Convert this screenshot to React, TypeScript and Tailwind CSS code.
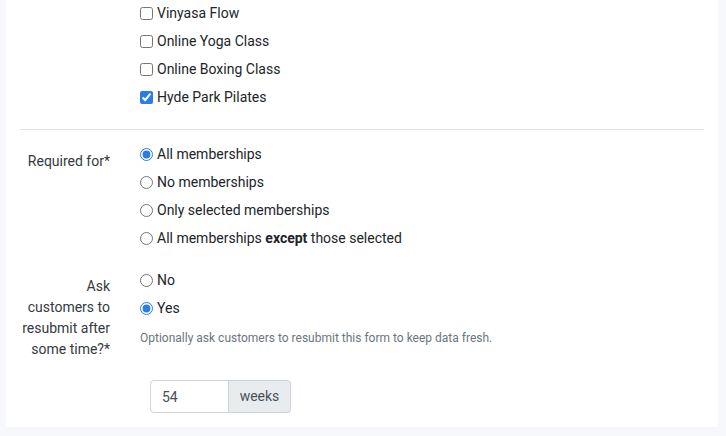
import React from "react";

const font = { fontFamily: "Roboto, 'Liberation Sans', sans-serif" };

function Check({ label, checked }: { label: string; checked?: boolean }) {
  return (
    <label className="flex h-[28px] items-center">
      <input
        type="checkbox"
        defaultChecked={checked}
        className="m-0 h-[13px] w-[13px] accent-[#2a7de8]"
      />
      <span className="ml-[4px]">{label}</span>
    </label>
  );
}

function Radio({
  name,
  checked,
  children,
}: {
  name: string;
  checked?: boolean;
  children: React.ReactNode;
}) {
  return (
    <label className="flex h-[28px] items-center">
      <input
        type="radio"
        name={name}
        defaultChecked={checked}
        className="m-0 h-[13px] w-[13px] accent-[#2a7de8]"
      />
      <span className="ml-[4px]">{children}</span>
    </label>
  );
}

export default function App() {
  return (
    <div
      className="h-[436px] w-[726px] overflow-hidden bg-[#f6f8fb] pl-[6px] pr-[8px] pb-[8px] text-[14px] text-[#212529]"
      style={font}
    >
      <div className="h-full bg-white pl-[14px] pr-[14px]">
        {/* classes checkboxes */}
        <div className="flex -mt-px">
          <div className="w-[90px]" />
          <div className="ml-[30px] flex flex-col">
            <Check label="Vinyasa Flow" />
            <Check label="Online Yoga Class" />
            <Check label="Online Boxing Class" />
            <Check label="Hyde Park Pilates" checked />
          </div>
        </div>

        <div className="mt-[18px] h-px bg-[#e3e5e8]" />

        {/* Required for */}
        <div className="mt-[10px] flex">
          <div className="w-[90px] pt-[11px] text-right leading-[21px] text-[#343a40]">
            Required for*
          </div>
          <div className="ml-[30px] flex flex-col">
            <Radio name="req" checked>
              All memberships
            </Radio>
            <Radio name="req">No memberships</Radio>
            <Radio name="req">Only selected memberships</Radio>
            <Radio name="req">
              All memberships <b className="font-bold">except</b> those selected
            </Radio>
          </div>
        </div>

        {/* Resubmit */}
        <div className="mt-[14px] flex">
          <div className="w-[90px] pt-[10px] text-right leading-[21px] text-[#343a40]">
            Ask customers to resubmit after some time?*
          </div>
          <div className="ml-[30px] flex flex-col">
            <Radio name="resub">No</Radio>
            <Radio name="resub" checked>
              Yes
            </Radio>
            <p className="mt-[7px] text-[12px] leading-[18px] text-[#6c757d]">
              Optionally ask customers to resubmit this form to keep data fresh.
            </p>
            <div className="ml-[10px] mt-[33px] flex h-[33px] w-[141px]">
              <input
                defaultValue="54"
                className="h-full w-[79px] rounded-l-[4px] border border-[#ced4da] px-[11px] text-[14px] text-[#495057] outline-none"
                style={font}
              />
              <div className="flex h-full flex-1 items-center justify-center rounded-r-[4px] border border-l-0 border-[#ced4da] bg-[#e9ecef] text-[#495057]">
                weeks
              </div>
            </div>
          </div>
        </div>
      </div>
    </div>
  );
}
